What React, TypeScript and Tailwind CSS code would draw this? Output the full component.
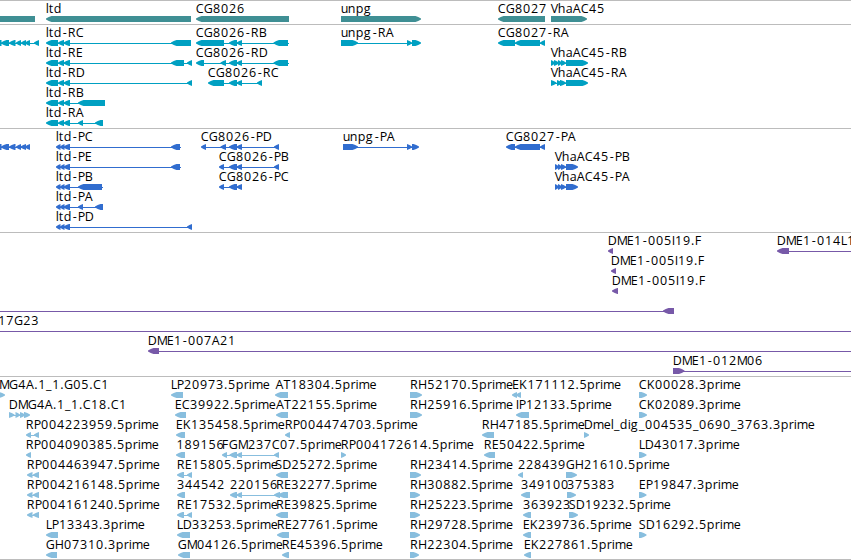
import React from "react";

type Span = [number, number];
interface Feature {
  row: number;
  label?: string;
  labelX?: number;
  dir?: "L" | "R" | "N";
  exons: Span[];
  line?: Span;
}

// Horizontal advance of each character in the track labels.
const ADVANCE: Record<string, number> = {
  A: 8, B: 7, C: 8, D: 9, E: 7, F: 7, G: 9, H: 9, I: 3, K: 8, L: 6, M: 10, P: 7, R: 8, S: 7, T: 7, V: 7,
  a: 7, d: 8, e: 7, g: 8, h: 8, i: 3, l: 3, m: 11, n: 8, p: 8, r: 5, t: 5, u: 7,
  "-": 6, ".": 4, _: 6,
};

function glyphPositions(text: string, start: number): string {
  let x = start;
  return [...text]
    .map((c) => {
      const digit = c >= "0" && c <= "9";
      const at = x + (digit ? 0.3 : c === "-" ? 0.9 : c === "_" ? 0.2 : c === "." ? 0.3 : 0);
      x += ADVANCE[c] ?? 8;
      return at.toFixed(1);
    })
    .join(" ");
}

// Blunt arrow: the head swells quickly from the tip to the full height.
function exonPoints([a, b]: Span, top: number, dir: "L" | "R" | "N"): string {
  const head = dir === "N" ? 0 : Math.min(5.5, b - a);
  const neck = head * 0.5;
  const end = top + 6;
  const upper = top + 0.9;
  const lower = end - 0.9;
  const m0 = top + 2.5;
  const m1 = top + 3.5;
  return dir === "R"
    ? `${a},${top} ${b - head},${top} ${b - neck},${upper} ${b},${m0} ${b},${m1} ${b - neck},${lower} ${b - head},${end} ${a},${end}`
    : `${b},${top} ${a + head},${top} ${a + neck},${upper} ${a},${m0} ${a},${m1} ${a + neck},${lower} ${a + head},${end} ${b},${end}`;
}

function Track({ features, color, className }: { features: Feature[]; color: string; className: string }) {
  return (
    <section className={`w-full shrink-0 overflow-hidden border-t border-[#bcbcbc] ${className}`}>
      <svg className={`block h-full w-full ${color}`} fill="currentColor">
        {features.map((f, i) => {
          const y = f.row * 20;
          return (
            <g key={i}>
              {f.line && (
                <rect x={f.line[0]} y={y + 18} width={f.line[1] - f.line[0]} height={1} shapeRendering="crispEdges" />
              )}
              {f.exons.map((e, j) => (
                <polygon key={j} points={exonPoints(e, y + 15, f.dir ?? "L")} />
              ))}
              {f.label && (
                <text className="fill-black" y={y + 12} x={glyphPositions(f.label, (f.labelX ?? f.exons[0][0]) - 0.2)}>
                  {f.label}
                </text>
              )}
            </g>
          );
        })}
      </svg>
    </section>
  );
}

const genes: Feature[] = [
  { row: 0, dir: "N", exons: [[-5, 35]] },
  { row: 0, label: "ltd", exons: [[46, 191]] },
  { row: 0, label: "CG8026", exons: [[196, 289]] },
  { row: 0, label: "unpg", dir: "R", exons: [[341, 421]] },
  { row: 0, label: "CG8027", exons: [[498, 545]] },
  { row: 0, label: "VhaAC45", dir: "R", exons: [[551, 587]] },
];

const utr: Span[] = [[46, 58], [58, 64], [63.5, 70]];
const mid: Span[] = [[229, 237], [236.5, 242]];
const transcripts: Feature[] = [
  { row: 0, exons: [[-6, 1.5], [1, 9], [9, 15.5], [16, 21], [21, 26], [25, 30], [34, 39]], line: [-5, 38] },
  { row: 0, label: "ltd-RC", exons: [...utr, [171, 191]], line: [47, 191] },
  { row: 1, label: "ltd-RE", exons: [...utr, [171, 184], [187, 192]], line: [47, 192] },
  { row: 2, label: "ltd-RD", exons: [...utr, [187, 192]], line: [47, 192] },
  { row: 3, label: "ltd-RB", exons: [...utr, [78, 105]], line: [47, 105] },
  { row: 4, label: "ltd-RA", exons: [...utr, [78, 83], [95, 103]], line: [47, 103] },
  { row: 0, label: "CG8026-RB", exons: [[196, 224], ...mid, [273.5, 288]], line: [197, 289] },
  { row: 1, label: "CG8026-RD", exons: [[196, 204], [220.5, 226], ...mid, [273.5, 288]], line: [197, 289] },
  { row: 2, label: "CG8026-RC", exons: [[208, 224], ...mid, [257, 262]], line: [209, 262] },
  { row: 0, label: "unpg-RA", dir: "R", exons: [[341, 358], [407, 412], [412, 421]], line: [341, 420] },
  { row: 0, label: "CG8027-RA", exons: [[498, 515], [515, 540], [540, 545]], line: [499, 545] },
  { row: 1, label: "VhaAC45-RB", dir: "R", exons: [[551, 555], [554, 559], [558, 562], [561, 566], [566, 588]], line: [551, 587] },
  { row: 2, label: "VhaAC45-RA", dir: "R", exons: [[551, 556.5], [557, 562], [560, 566], [566, 588]], line: [551, 587] },
];

const cds: Span[] = [[56, 60.5], [60, 64.5], [63.5, 70]];
const proteins: Feature[] = [
  { row: 0, exons: [[-6, 1.5], [1, 9], [9, 15.5], [16, 21], [20.5, 26], [25, 30]], line: [-5, 30] },
  { row: 0, label: "ltd-PC", exons: [...cds, [171, 180]], line: [57, 181] },
  { row: 1, label: "ltd-PE", exons: [...cds, [171, 180]], line: [57, 181] },
  { row: 2, label: "ltd-PB", exons: [...cds, [78, 102]], line: [57, 103] },
  { row: 3, label: "ltd-PA", exons: [...cds, [78, 83], [95, 103]], line: [57, 103] },
  { row: 4, label: "ltd-PD", exons: [...cds, [187, 192]], line: [57, 192] },
  { row: 0, label: "CG8026-PD", exons: [[201, 206], [220.5, 226], ...mid, [274, 279]], line: [202, 279] },
  { row: 1, label: "CG8026-PB", exons: [[219, 224], ...mid, [274, 279]], line: [220, 279] },
  { row: 2, label: "CG8026-PC", exons: [[219, 224], ...mid], line: [220, 242] },
  { row: 0, label: "unpg-PA", dir: "R", exons: [[343, 358], [407, 412], [412, 419]], line: [343, 418] },
  { row: 0, label: "CG8027-PA", exons: [[506, 515], [515, 540], [540, 545]], line: [507, 545] },
  { row: 1, label: "VhaAC45-PB", dir: "R", exons: [[555, 559], [558, 562], [561, 566], [566, 578]], line: [555, 577] },
  { row: 2, label: "VhaAC45-PA", dir: "R", exons: [[555, 559], [558, 562], [561, 566], [566, 578]], line: [555, 577] },
];

const clones: Feature[] = [
  { row: 0, label: "DME1-005I19.F", exons: [[608, 613]] },
  { row: 1, label: "DME1-005I19.F", exons: [[611, 616]] },
  { row: 2, label: "DME1-005I19.F", exons: [[612, 618]] },
  { row: 0, label: "DME1-014L1", exons: [[777, 789]], line: [778, 860] },
  { row: 3, exons: [[663, 674]], line: [-5, 673] },
  { row: 4, label: "17G23", labelX: -1.8, exons: [], line: [-5, 860] },
  { row: 5, label: "DME1-007A21", exons: [[148, 159]], line: [149, 860] },
  { row: 6, label: "DME1-012M06", dir: "R", exons: [[673, 684.5]], line: [673, 860] },
];

const est = (row: number, label: string, dir: "L" | "R", exons: Span[], labelX?: number): Feature => ({
  row,
  label,
  dir,
  exons,
  labelX,
  line: exons.length > 1 ? [exons[0][0] + 1, exons[exons.length - 1][1] - 1] : undefined,
});

const ests: Feature[] = [
  est(0, "MG4A.1_1.G05.C1", "R", [[-5, 5]], -0.9),
  est(0, "LP20973.5prime", "L", [[171, 183]]),
  est(0, "AT18304.5prime", "L", [[275, 288]], 275.6),
  est(0, "RH52170.5prime", "R", [[410, 422]], 410.2),
  est(0, "EK171112.5prime", "L", [[512, 517], [516, 521]], 512.3),
  est(0, "CK00028.3prime", "R", [[639, 647]]),
  est(1, "DMG4A.1_1.C18.C1", "R", [[9, 14.5], [15.5, 20], [20, 25], [24, 30]]),
  est(1, "EC39922.5prime", "L", [[175, 186]]),
  est(1, "AT22155.5prime", "L", [[276, 288]], 276.3),
  est(1, "RH25916.5prime", "R", [[410, 422]], 410.2),
  est(1, "IP12133.5prime", "L", [[516, 529]]),
  est(1, "CK02089.3prime", "R", [[639, 647]]),
  est(2, "RP004223959.5prime", "L", [[26, 31], [34, 39]]),
  est(2, "EK135458.5prime", "L", [[176, 185]]),
  est(2, "RP004474703.5prime", "L", [[285, 290]]),
  est(2, "RH47185.5prime", "L", [[482, 494]]),
  est(2, "Dmel_dig_004535_0690_3763.3prime", "R", [[584, 589]]),
  est(3, "RP004090385.5prime", "L", [[26, 31]]),
  est(3, "189156", "L", [[176, 185]], 176.3),
  est(3, "FGM237C07.5prime", "L", [[222, 227], [229.5, 237], [236.5, 242], [274, 279]]),
  est(3, "RP004172614.5prime", "R", [[341, 346]]),
  est(3, "RE50422.5prime", "L", [[484, 495]]),
  est(3, "LD43017.3prime", "R", [[639, 646.5]]),
  est(4, "RP004463947.5prime", "L", [[27, 32.5], [33, 39]]),
  est(4, "RE15805.5prime", "L", [[177, 184], [187, 192]]),
  est(4, "SD25272.5prime", "L", [[276, 288]], 275.5),
  est(4, "RH23414.5prime", "R", [[410, 421]], 410.2),
  est(4, "228439", "L", [[518, 523]]),
  est(4, "GH21610.5prime", "R", [[566, 577]]),
  est(5, "RP004216148.5prime", "L", [[27, 32.5], [33, 39]]),
  est(5, "344542", "L", [[177, 185]]),
  est(5, "220156", "L", [[230, 237], [236.5, 242], [274, 280]]),
  est(5, "RE32277.5prime", "L", [[278, 288]], 276.2),
  est(5, "RH30882.5prime", "R", [[410, 420]], 410.2),
  est(5, "349100", "L", [[521, 530]]),
  est(5, "375383", "R", [[567, 576]]),
  est(5, "EP19847.3prime", "R", [[639, 646.5]]),
  est(6, "RP004161240.5prime", "L", [[27, 32.5], [33, 39]]),
  est(6, "RE17532.5prime", "L", [[177, 184], [187, 192]]),
  est(6, "RE39825.5prime", "L", [[276, 288]], 276.3),
  est(6, "RH25223.5prime", "R", [[410, 420]], 410.2),
  est(6, "363923", "L", [[523, 531]]),
  est(6, "SD19232.5prime", "R", [[569, 578]]),
  est(7, "LP13343.3prime", "L", [[46, 58]]),
  est(7, "LD33253.5prime", "L", [[177, 190]]),
  est(7, "RE27761.5prime", "L", [[277, 289]]),
  est(7, "RH29728.5prime", "R", [[410, 420]], 410.2),
  est(7, "EK239736.5prime", "L", [[523, 531]]),
  est(7, "SD16292.5prime", "R", [[639, 646.5]]),
  est(8, "GH07310.3prime", "L", [[46, 57]]),
  est(8, "GM04126.5prime", "L", [[178, 190]]),
  est(8, "RE45396.5prime", "L", [[282, 289]]),
  est(8, "RH22304.5prime", "R", [[410, 419]], 410.2),
  est(8, "EK227861.5prime", "L", [[524, 531]]),
];

export default function App() {
  return (
    <main className="flex h-[560px] w-[851px] flex-col overflow-hidden border-b border-[#bcbcbc] bg-white font-['Open_Sans','Noto_Sans',sans-serif] text-[12.5px]">
      <Track features={genes} color="text-[#3f8f94]" className="h-6" />
      <Track features={transcripts} color="text-[#00a0c2]" className="h-[104px]" />
      <Track features={proteins} color="text-[#316dcf]" className="h-[104px]" />
      <Track features={clones} color="text-[#7759a8]" className="h-36" />
      <Track features={ests} color="text-[#88bede]" className="h-[183px]" />
    </main>
  );
}
